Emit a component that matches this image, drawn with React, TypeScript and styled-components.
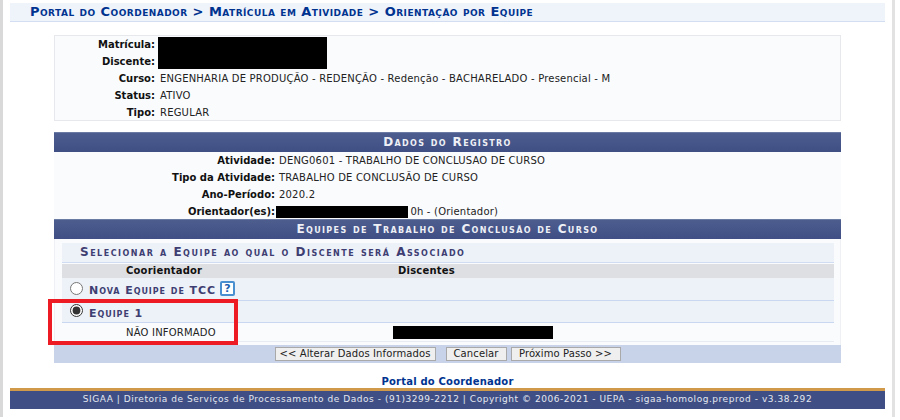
import React, { FC } from 'react';
import styled, { createGlobalStyle } from 'styled-components';

const GlobalStyle = createGlobalStyle`
    html, body {
        margin: 0;
        padding: 0;
        background: #fff;
    }
    body {
        font-family: "DejaVu Sans", Verdana, sans-serif;
        font-size: 10px;
        letter-spacing: 0.2px;
        color: #222;
    }
`;

const Page = styled.div`
    position: relative;
    box-sizing: border-box;
    width: 895px;
    height: 417px;
    padding: 3px 7px 0;
    border-left: 3px solid #d9d9d9;
    border-right: 3px solid #e2e2e2;
`;

const Breadcrumb = styled.h2`
    box-sizing: border-box;
    height: 19px;
    margin: 0;
    padding-left: 20px;
    background: #eff3fa;
    border-bottom: 1px solid #d3def2;
    color: #003390;
    font-size: 13px;
    line-height: 18px;
    font-weight: bold;
    font-variant: small-caps;
    letter-spacing: 0.46px;
`;

const Content = styled.div`
    width: 787px;
    margin: 13px 0 0 44px;
`;

const InfoPanel = styled.div`
    box-sizing: border-box;
    height: 86px;
    background: #f9fbfd;
    border: 1px solid #e6e8ec;
`;

const InfoGrid = styled.div<{ $labelWidth: number; $gap: number }>`
    display: grid;
    grid-template-columns: ${p => p.$labelWidth}px 1fr;
    grid-auto-rows: 17px;
    column-gap: ${p => p.$gap}px;
    align-items: center;
`;

const Label = styled.div`
    text-align: right;
    font-weight: bold;
    letter-spacing: 0;
    color: #111;
`;

const Value = styled.div`
    color: #222;
    white-space: nowrap;
`;

const Redaction = styled.span<{ $width: number; $height: number }>`
    display: inline-block;
    width: ${p => p.$width}px;
    height: ${p => p.$height}px;
    background: #000;
    vertical-align: middle;
`;

const NameBlock = styled.div`
    grid-column: 2;
    grid-row: 1 / span 2;
    margin-left: -2px;
    height: 32px;
`;

const AdvisorRedaction = styled(Redaction)`
    margin: 0 -1px 0 -3px;
`;

const Form = styled.div`
    margin-top: 11px;
    background: #f9fbfd;
`;

const BandHeader = styled.div`
    box-sizing: border-box;
    height: 20px;
    background: linear-gradient(#4d5d8e, #3f4f85);
    border-top: 1px solid #6b7aa3;
    color: #eef0f6;
    text-align: center;
    font-size: 12px;
    line-height: 19px;
    font-weight: bold;
    font-variant: small-caps;
    letter-spacing: 1.35px;
`;

const RecordGrid = styled(InfoGrid)`
    height: 67px;
    align-content: start;
`;

const InnerWrap = styled.div`
    box-sizing: border-box;
    padding: 4px 6px 3px 7px;
    border-left: 1px solid #eef0f4;
    border-right: 1px solid #eef0f4;
`;

const SubTitle = styled.div`
    box-sizing: border-box;
    height: 20px;
    padding-left: 18px;
    background: #edf1f8;
    border-bottom: 1px solid #cfdcf2;
    color: #3e3e72;
    font-size: 12px;
    line-height: 19px;
    font-weight: bold;
    font-variant: small-caps;
    letter-spacing: 1.5px;
`;

const TeamTable = styled.div`
    margin-top: 1px;
`;

const Columns = styled.div`
    display: grid;
    grid-template-columns: 331px 1fr;
`;

const HeadRow = styled(Columns)`
    height: 14px;
    background: #dedfe3;
    font-weight: bold;
    line-height: 14px;
    color: #111;
`;

const HeadCell = styled.div<{ $indent: number }>`
    padding-left: ${p => p.$indent}px;
`;

const TeamRow = styled.div<{ $height: number }>`
    box-sizing: border-box;
    display: flex;
    align-items: center;
    gap: 6px;
    height: ${p => p.$height}px;
    padding-left: 8px;
    background: #edf1f8;
    border-bottom: 1px solid #c9d7f0;
`;

const Radio = styled.input`
    width: 13px;
    height: 13px;
    margin: 0 0 2px;
    accent-color: #333;
`;

const TeamName = styled.span`
    margin-top: 3px;
    color: #3e3e72;
    font-size: 11px;
    font-weight: bold;
    font-variant: small-caps;
    letter-spacing: 0.95px;
`;

const HelpIcon = styled.span`
    box-sizing: border-box;
    width: 15px;
    height: 15px;
    margin: 0 0 1px -2px;
    border: 2px solid #4a90d0;
    border-radius: 2px;
    background: #fff;
    color: #1f5fb0;
    font-size: 11px;
    line-height: 11px;
    font-weight: bold;
    text-align: center;
`;

const MemberRow = styled(Columns)`
    height: 18px;
    align-items: center;
    border-bottom: 1px solid #e8ebf1;
`;

const ButtonBar = styled.div`
    box-sizing: border-box;
    display: flex;
    justify-content: center;
    align-items: center;
    gap: 4px;
    height: 18px;
    background: #c8d3ea;
`;

const Button = styled.button<{ $width: number; $gap?: number }>`
    box-sizing: border-box;
    width: ${p => p.$width}px;
    height: 14px;
    margin-right: ${p => p.$gap || 0}px;
    padding: 0;
    background: #efefef;
    border: 1px solid #a9a9a9;
    color: #222;
    font-family: inherit;
    font-size: 10px;
    letter-spacing: 0.1px;
    line-height: 12px;
`;

const PortalLink = styled.a`
    display: block;
    margin-top: 12px;
    height: 12px;
    color: #003390;
    text-align: center;
    font-weight: bold;
    line-height: 13px;
`;

const Footer = styled.div`
    box-sizing: border-box;
    height: 21px;
    margin-top: 1px;
    background: #3f4f85;
    border-top: 3px solid #d19a4a;
    color: #e4e7f0;
    text-align: center;
    font-size: 9px;
    line-height: 17px;
    letter-spacing: 0.54px;
`;

const Highlight = styled.div`
    position: absolute;
    left: 45px;
    top: 299px;
    box-sizing: border-box;
    width: 190px;
    height: 46px;
    border: 4px solid #ed1c24;
`;

const App: FC = () => {
    return (
        <>
            <GlobalStyle />
            <Page>
                <Breadcrumb>Portal do Coordenador &gt; Matrícula em Atividade &gt; Orientação por Equipe</Breadcrumb>
                <Content>
                    <InfoPanel>
                        <InfoGrid $labelWidth={100} $gap={5}>
                            <Label>Matrícula:</Label>
                            <NameBlock>
                                <Redaction $width={169} $height={32} />
                            </NameBlock>
                            <Label>Discente:</Label>
                            <Label>Curso:</Label>
                            <Value>ENGENHARIA DE PRODUÇÃO - REDENÇÃO - Redenção - BACHARELADO - Presencial - M</Value>
                            <Label>Status:</Label>
                            <Value>ATIVO</Value>
                            <Label>Tipo:</Label>
                            <Value>REGULAR</Value>
                        </InfoGrid>
                    </InfoPanel>

                    <Form>
                        <BandHeader>Dados do Registro</BandHeader>
                        <RecordGrid $labelWidth={221} $gap={4}>
                            <Label>Atividade:</Label>
                            <Value>DENG0601 - TRABALHO DE CONCLUSAO DE CURSO</Value>
                            <Label>Tipo da Atividade:</Label>
                            <Value>TRABALHO DE CONCLUSÃO DE CURSO</Value>
                            <Label>Ano-Período:</Label>
                            <Value>2020.2</Value>
                            <Label>Orientador(es):</Label>
                            <Value>
                                <AdvisorRedaction $width={132} $height={12} /> 0h - (Orientador)
                            </Value>
                        </RecordGrid>
                        <BandHeader>Equipes de Trabalho de Conclusão de Curso</BandHeader>
                        <InnerWrap>
                            <SubTitle>Selecionar a Equipe ao qual o Discente será Associado</SubTitle>
                            <TeamTable>
                                <HeadRow>
                                    <HeadCell $indent={64}>Coorientador</HeadCell>
                                    <HeadCell $indent={5}>Discentes</HeadCell>
                                </HeadRow>
                                <TeamRow $height={23}>
                                    <Radio type="radio" name="equipe" />
                                    <TeamName>Nova Equipe de TCC</TeamName>
                                    <HelpIcon>?</HelpIcon>
                                </TeamRow>
                                <TeamRow $height={22}>
                                    <Radio type="radio" name="equipe" defaultChecked />
                                    <TeamName>Equipe 1</TeamName>
                                </TeamRow>
                                <MemberRow>
                                    <HeadCell $indent={64}>NÃO INFORMADO</HeadCell>
                                    <div>
                                        <Redaction $width={160} $height={13} />
                                    </div>
                                </MemberRow>
                            </TeamTable>
                        </InnerWrap>
                        <ButtonBar>
                            <Button $width={161} $gap={6}>&lt;&lt; Alterar Dados Informados</Button>
                            <Button $width={61}>Cancelar</Button>
                            <Button $width={110}>Próximo Passo &gt;&gt;</Button>
                        </ButtonBar>
                    </Form>
                </Content>
                <PortalLink>Portal do Coordenador</PortalLink>
                <Footer>SIGAA | Diretoria de Serviços de Processamento de Dados - (91)3299-2212 | Copyright © 2006-2021 - UEPA - sigaa-homolog.preprod - v3.38.292</Footer>
                <Highlight />
            </Page>
        </>
    );
};

export default App;
